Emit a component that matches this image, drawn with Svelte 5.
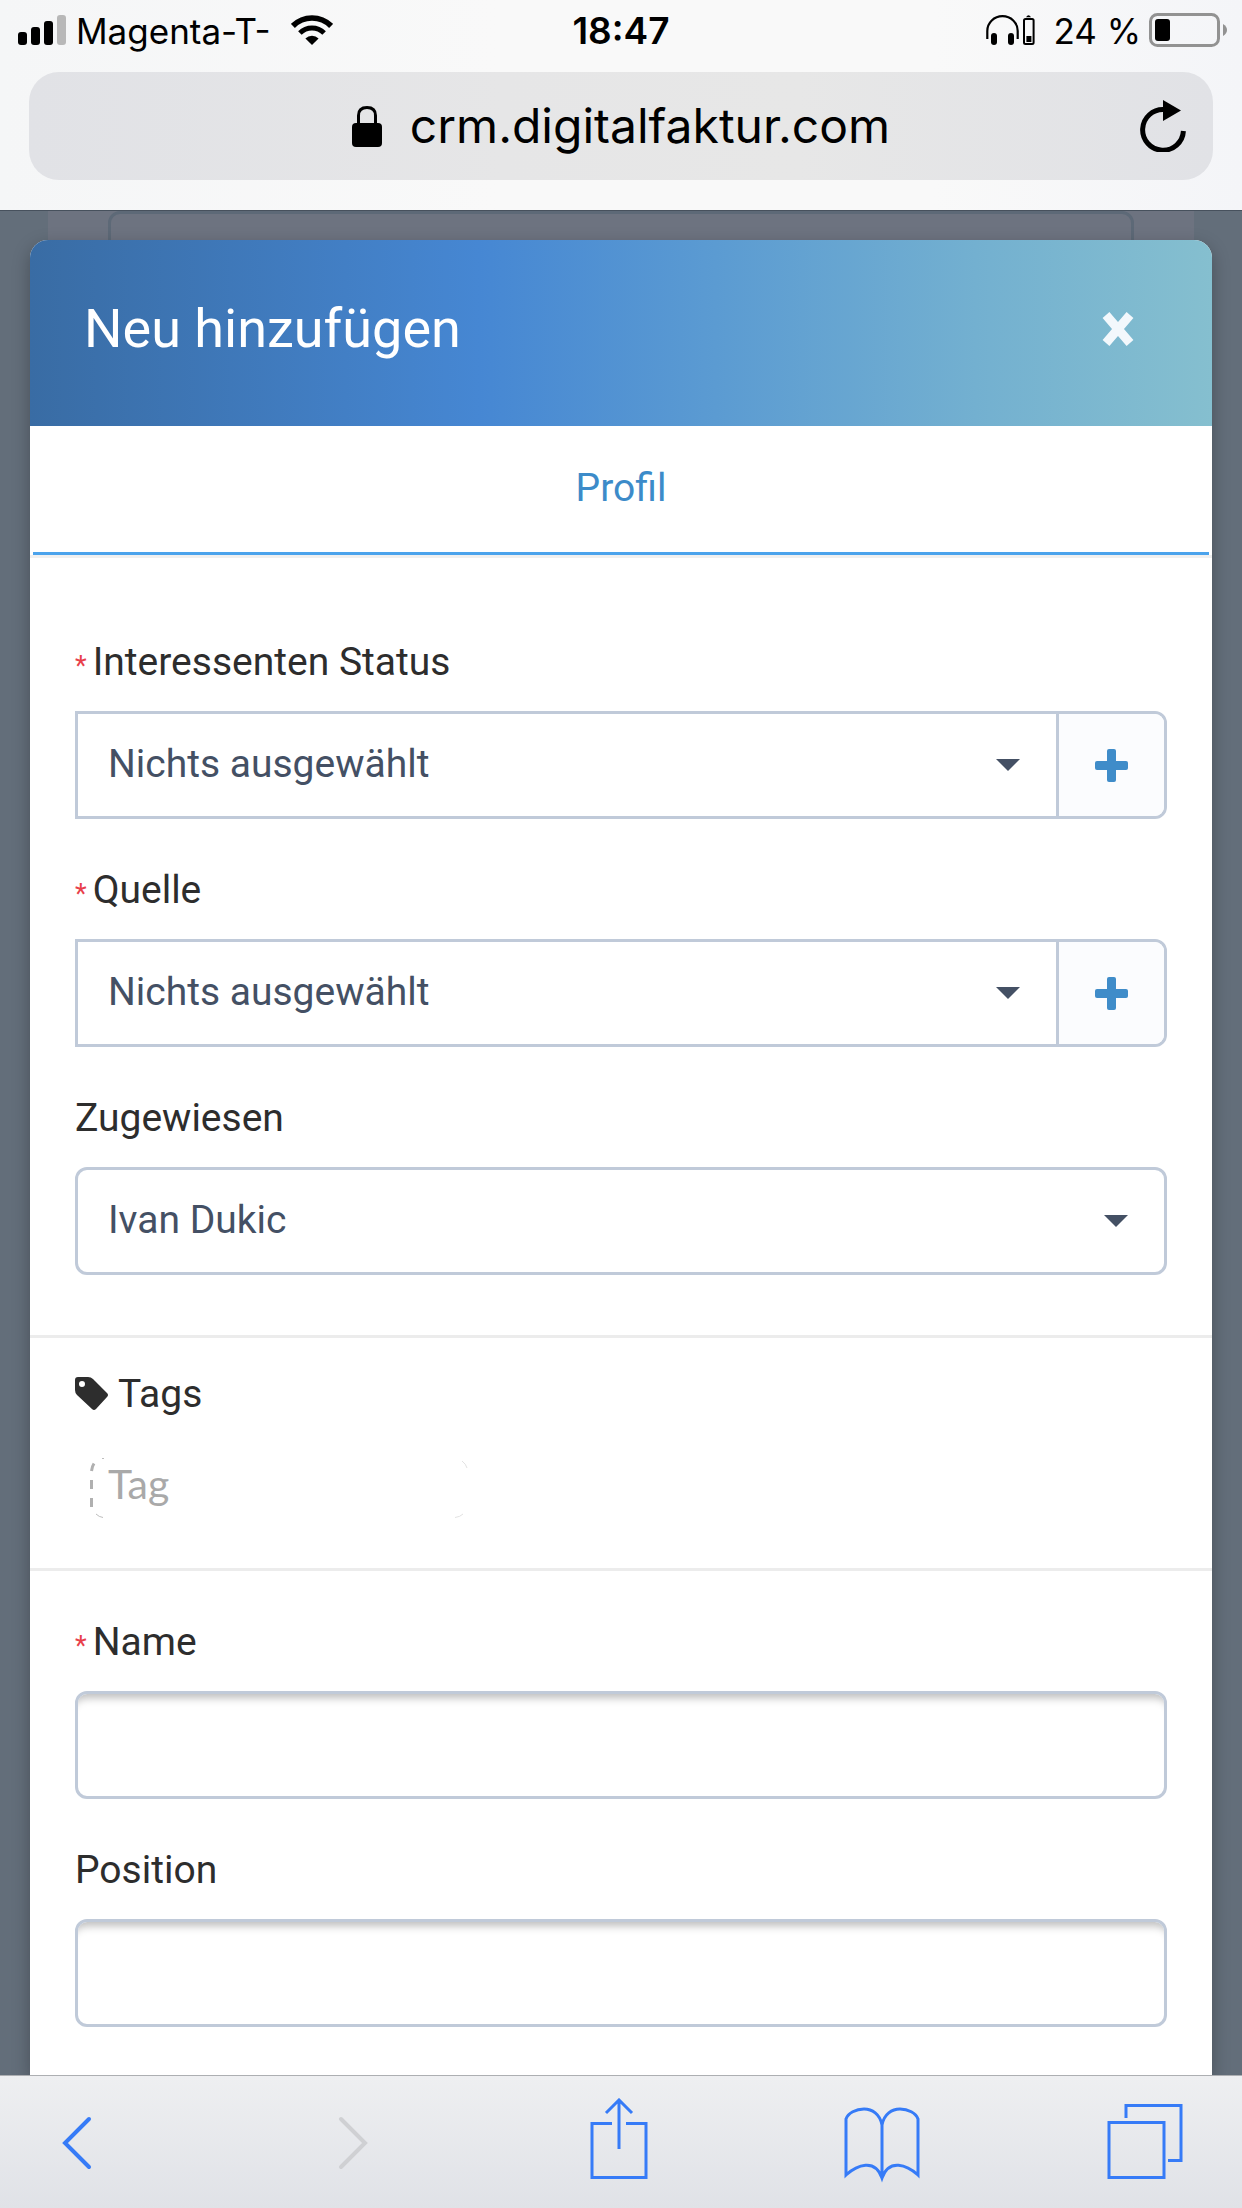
<script lang="ts">
  type Field = {
    id: string;
    label: string;
    kind: 'select' | 'text';
    required?: boolean;
    addable?: boolean;
    options?: string[];
  };

  const assignment: Field[] = [
    { id: 'status', label: 'Interessenten Status', kind: 'select', required: true, addable: true, options: ['Nichts ausgewählt'] },
    { id: 'source', label: 'Quelle', kind: 'select', required: true, addable: true, options: ['Nichts ausgewählt'] },
    { id: 'assigned', label: 'Zugewiesen', kind: 'select', options: ['Ivan Dukic'] }
  ];

  const details: Field[] = [
    { id: 'name', label: 'Name', kind: 'text', required: true },
    { id: 'position', label: 'Position', kind: 'text' }
  ];

  let open = $state(true);
  let tag = $state('');
</script>

{#snippet formField(field: Field)}
  <div class="field">
    <label for={field.id}>
      {#if field.required}<small class="req">*</small>{/if}{field.label}
    </label>
    {#if field.kind === 'select'}
      <div class="input-group" class:addable={field.addable}>
        <div class="select">
          <select id={field.id}>
            {#each field.options ?? [] as option}
              <option>{option}</option>
            {/each}
          </select>
          <svg class="caret" viewBox="0 0 24 12" aria-hidden="true">
            <path d="M0 0h24L12 12z" fill="currentColor" />
          </svg>
        </div>
        {#if field.addable}
          <button type="button" class="add" aria-label="{field.label} hinzufügen">
            <svg viewBox="0 0 33 33" width="33" height="33" aria-hidden="true">
              <rect x="12" width="9" height="33" rx="2" fill="currentColor" />
              <rect y="12" width="33" height="9" rx="2" fill="currentColor" />
            </svg>
          </button>
        {/if}
      </div>
    {:else}
      <input class="text-input" id={field.id} type="text" />
    {/if}
  </div>
{/snippet}

<div class="screen">
  <header class="browser-top">
    <div class="status">
      <div class="status-left">
        <svg class="signal" viewBox="0 0 48 30" width="48" height="30" aria-hidden="true">
          <rect x="0" y="17" width="9" height="13" rx="3" />
          <rect x="13" y="12" width="9" height="18" rx="3" />
          <rect x="26" y="6" width="9" height="24" rx="3" />
          <rect x="39" y="0" width="9" height="30" rx="3" fill="#b8b8b8" />
        </svg>
        <span>Magenta-T-</span>
        <svg class="wifi" viewBox="0 0 42 30" width="42" height="30" aria-hidden="true">
          <path d="M1.9 10.9a27 27 0 0 1 38.2 0" fill="none" stroke="#000" stroke-width="5.6" />
          <path d="M8.9 17.9a17.1 17.1 0 0 1 24.2 0" fill="none" stroke="#000" stroke-width="5" />
          <path d="M21 30l-6.6-6.6a9.3 9.3 0 0 1 13.2 0z" />
        </svg>
      </div>
      <time>18:47</time>
      <div class="status-right">
        <svg class="headphones" viewBox="0 0 49 30" width="49" height="30" aria-hidden="true">
          <path d="M1.3 24v-8a15.2 14.8 0 0 1 30.4 0v8" fill="none" stroke="#000" stroke-width="2.2" />
          <rect x="5" y="18" width="6" height="12" rx="3" />
          <rect x="22" y="18" width="6" height="12" rx="3" />
          <path d="M40 2.2q2.5-4 5 0z" />
          <rect x="38" y="4" width="9.6" height="25" rx="1.5" fill="none" stroke="#000" stroke-width="2" />
          <rect x="40.4" y="21" width="5" height="6" />
        </svg>
        <span>24 %</span>
        <svg class="battery" viewBox="0 0 78 34" width="78" height="34" aria-hidden="true">
          <rect x="1.5" y="1.5" width="68" height="31" rx="7" fill="none" stroke="#929292" stroke-width="3" />
          <rect x="6" y="6" width="15" height="22" rx="3" />
          <path d="M74 11q4 2.500 4 6t-4 6z" fill="#929292" />
        </svg>
      </div>
    </div>

    <div class="address-bar">
      <button type="button" class="address">
        <svg viewBox="0 0 30 41" width="30" height="41" aria-hidden="true">
          <path d="M6.500 18v-8.500q0-8 8.500-8t8.500 8V18" fill="none" stroke="#000" stroke-width="3" />
          <rect y="17" width="30" height="24" rx="4" />
        </svg>
        <span>crm.digitalfaktur.com</span>
      </button>
      <button type="button" class="reload" aria-label="Neu laden">
        <svg viewBox="0 0 46 52" width="46" height="52" aria-hidden="true">
          <path d="M24 9.500A20.400 20.400 0 1 0 43.400 31" fill="none" stroke="#000" stroke-width="5" />
          <path d="M23 0l18 10.500L23 21z" />
        </svg>
      </button>
    </div>
  </header>

  <main>
    <div class="page-behind" aria-hidden="true"><div class="panel-behind"></div></div>

    {#if open}
      <div class="modal" role="dialog" aria-labelledby="modal-title">
        <div class="modal-header">
          <h1 id="modal-title">Neu hinzufügen</h1>
          <button type="button" class="close" aria-label="Schließen" onclick={() => (open = false)}>
            <svg viewBox="0 0 32 36" width="32" height="36" aria-hidden="true">
              <path d="M4 4l24 28M28 4L4 32" stroke="#f3f8fc" stroke-width="9" stroke-linejoin="round" />
            </svg>
          </button>
        </div>

        <nav class="tabs">
          <a href="#profil">Profil</a>
        </nav>

        <form id="profil">
          <section>
            {#each assignment as field (field.id)}
              {@render formField(field)}
            {/each}
          </section>

          <section class="tags">
            <label for="tags">
              <svg viewBox="0 0 33 35" width="33" height="35" aria-hidden="true">
                <path fill-rule="evenodd" fill="currentColor" d="M3 0h10q3 0 5 2l14 14q2 2 0 4L21 32q-2 2-4 0L2 18q-2-2-2-5V3q0-3 3-3zm4 4a3 3 0 1 0 0 6 3 3 0 0 0 0-6z" />
              </svg>
              Tags
            </label>
            <div class="tag-box">
              <svg viewBox="0 0 378 60" width="378" height="60" aria-hidden="true">
                <path d="M4 5.500q-2 3-2.500 7.500M1.500 22v9M1.500 40v9" stroke="#b0b0b0" stroke-width="3" />
                <path d="M6 56q3 3 7 3.500M12 .5h2" stroke="#bdbdbd" stroke-width="1" />
                <path d="M372 3q4 3 5 7M365 59.500q5-.5 8-3.500" stroke="#e2e2e2" stroke-width="1" />
              </svg>
              <input class="tag-input" id="tags" type="text" placeholder="Tag" bind:value={tag} />
            </div>
          </section>

          <section>
            {#each details as field (field.id)}
              {@render formField(field)}
            {/each}
          </section>
        </form>
      </div>
    {/if}
  </main>

  <footer class="toolbar">
    <button type="button" aria-label="Zurück">
      <svg viewBox="0 0 78 88"><path d="M36 21L12 45l24 24" stroke-width="4" stroke-linecap="round" /></svg>
    </button>
    <button type="button" aria-label="Vorwärts" disabled>
      <svg viewBox="0 0 78 88"><path d="M25 21l24 24-24 24" stroke-width="4" stroke-linecap="round" /></svg>
    </button>
    <button type="button" aria-label="Teilen">
      <svg viewBox="0 0 78 88">
        <path d="M32 25.500H12v54h54v-54H46M39 51V2M26 15L39 2l13 13" />
      </svg>
    </button>
    <button type="button" aria-label="Lesezeichen">
      <svg viewBox="0 0 78 88">
        <path d="M39 80V27C37 16 29 11 21 11 13 11 5 15 3 21V77C14 67 32 60 39 80C46 60 64 67 75 77V21C73 15 65 11 57 11 49 11 41 16 39 27" />
      </svg>
    </button>
    <button type="button" aria-label="Tabs">
      <svg viewBox="0 0 78 88">
        <path d="M3 24.500h55v55H3zM20 20V7.500h55v55H62" />
      </svg>
    </button>
  </footer>
</div>

<style>
  :global(body) {
    margin: 0;
    background: #636e7a;
  }

  .screen {
    display: flex;
    flex-direction: column;
    min-height: 100vh;
    font-family: Roboto, 'Liberation Sans', sans-serif;
    font-size: 39px;
    line-height: 56px;
    color: #2d2d2d;
  }

  .screen * {
    box-sizing: border-box;
  }

  button,
  input,
  select {
    margin: 0;
    padding: 0;
    border: 0;
    background: none;
    font: inherit;
    color: inherit;
  }

  svg {
    display: block;
    flex: none;
  }

  /* Browser chrome */
  .browser-top {
    padding-bottom: 30px;
    border-bottom: 1px solid #47515d;
    background: linear-gradient(90deg, #f5f6f7, #f9f9f9 40%, #f9f9f9 75%, #f4f5f8);
    font-family: Inter, 'Liberation Sans', sans-serif;
    color: #000;
  }

  .status {
    display: grid;
    grid-template-columns: 1fr auto 1fr;
    align-items: center;
    height: 60px;
    padding: 0 15px;
    font-size: 35px;
  }

  .status span,
  time {
    padding-top: 2px;
  }

  .status-left,
  .status-right {
    display: flex;
    align-items: center;
  }

  .status-left {
    gap: 10px;
    padding-left: 3px;
  }

  .status-right {
    gap: 8px;
    justify-content: flex-end;
  }

  .wifi {
    margin-left: 10px;
  }

  .headphones {
    margin-right: 10px;
  }

  time {
    font-size: 37px;
    font-weight: 600;
  }

  .address-bar {
    display: grid;
    grid-template-columns: 1fr auto 1fr;
    align-items: center;
    height: 108px;
    margin: 12px 29px 0;
    padding: 0 27px;
    border-radius: 30px;
    background: linear-gradient(90deg, #e1e2e6, #e6e6e7 40%, #e7e7e7 65%, #e1e2e6);
  }

  .address {
    grid-column: 2;
    display: flex;
    align-items: center;
    gap: 28px;
    font-size: 48px;
  }

  .reload {
    justify-self: end;
  }

  /* Dimmed page under the dialog */
  main {
    position: relative;
    display: flex;
    flex: 1;
    padding: 29px 30px 0;
    overflow: hidden;
    background: #636e7a;
  }

  .page-behind {
    position: absolute;
    top: 0;
    left: 48px;
    right: 48px;
    height: 60px;
    padding: 0 60px;
    background: #6d7380;
  }

  .panel-behind {
    height: 60px;
    border: 3px solid #5d6977;
    border-radius: 12px;
  }

  /* Dialog */
  .modal {
    position: relative;
    flex: 1;
    min-width: 0;
    border-radius: 18px 18px 0 0;
    background: #fff;
    box-shadow: 0 6px 18px rgba(0, 0, 0, 0.28);
  }

  .modal-header {
    display: flex;
    align-items: center;
    justify-content: space-between;
    height: 186px;
    padding: 0 78px 8px 54px;
    border-radius: 18px 18px 0 0;
    background: linear-gradient(90deg, #396ca4, #4687d3 38%, #5b9bd2 58%, #73b0d0 80%, #85bfcf);
    color: #fff;
  }

  h1 {
    margin: 0;
    font-size: 54px;
    font-weight: 400;
    line-height: 60px;
  }

  .tabs {
    padding: 0 3px;
    border-bottom: 3px solid #f0f0f0;
  }

  .tabs a {
    display: block;
    padding: 34px 0 36px;
    border-bottom: 3px solid #4ba3ec;
    text-align: center;
    text-decoration: none;
    color: #3c8bc9;
  }

  form {
    padding-top: 33px;
  }

  section {
    padding: 43px 45px 60px;
  }

  section + section {
    border-top: 3px solid #ececec;
  }

  .field + .field {
    margin-top: 43px;
  }

  label {
    display: block;
    margin-bottom: 21px;
  }

  .req {
    margin-right: 6px;
    font-size: 27px;
    line-height: 1;
    color: #e8404a;
  }

  .input-group {
    display: flex;
    height: 108px;
    border: 3px solid #c0cad9;
    border-radius: 12px;
  }

  .input-group.addable {
    border-radius: 0 12px 12px 0;
  }

  .select {
    position: relative;
    flex: 1;
    color: #445064;
  }

  select {
    display: block;
    width: 100%;
    height: 100%;
    padding: 0 96px 2px 30px;
    appearance: none;
  }

  .caret {
    position: absolute;
    top: 45px;
    right: 36px;
    width: 24px;
    height: 12px;
    pointer-events: none;
  }

  .add {
    display: grid;
    place-items: center;
    width: 108px;
    border-left: 3px solid #c0cad9;
    border-radius: 0 9px 9px 0;
    background: #fbfcfe;
    color: #3f8cc9;
  }

  .text-input {
    display: block;
    width: 100%;
    height: 108px;
    padding: 0 30px;
    border: 3px solid #c0cad9;
    border-radius: 12px;
    background: #fff;
    box-shadow: inset 0 12px 9px -8px rgba(0, 0, 0, 0.26);
  }

  .tags {
    padding: 28px 45px 50px;
  }

  .tags label {
    display: flex;
    align-items: center;
    gap: 10px;
    margin-bottom: 36px;
  }

  .tag-box {
    position: relative;
    width: 378px;
    margin-left: 15px;
  }

  .tag-box svg {
    position: absolute;
    inset: 0;
    fill: none;
    pointer-events: none;
  }

  .tag-input {
    display: block;
    width: 100%;
    height: 60px;
    padding: 0 18px 10px;
    font-family: Lato, 'Open Sans', sans-serif;
    font-size: 41px;
    line-height: 50px;
  }

  .tag-input::placeholder {
    color: #a9a9a9;
    opacity: 1;
  }

  section:last-child {
    padding-bottom: 48px;
  }

  .toolbar {
    display: flex;
    align-items: center;
    justify-content: space-between;
    height: 133px;
    padding: 0 58px 0 53px;
    border-top: 1px solid #adafb2;
    background: linear-gradient(#eeeff1, #e0e2e7);
    color: #367bf7;
  }

  .toolbar button:disabled {
    color: #cfd0d3;
  }

  .toolbar svg {
    width: 78px;
    height: 88px;
    fill: none;
    stroke: currentColor;
    stroke-width: 3;
  }
</style>
